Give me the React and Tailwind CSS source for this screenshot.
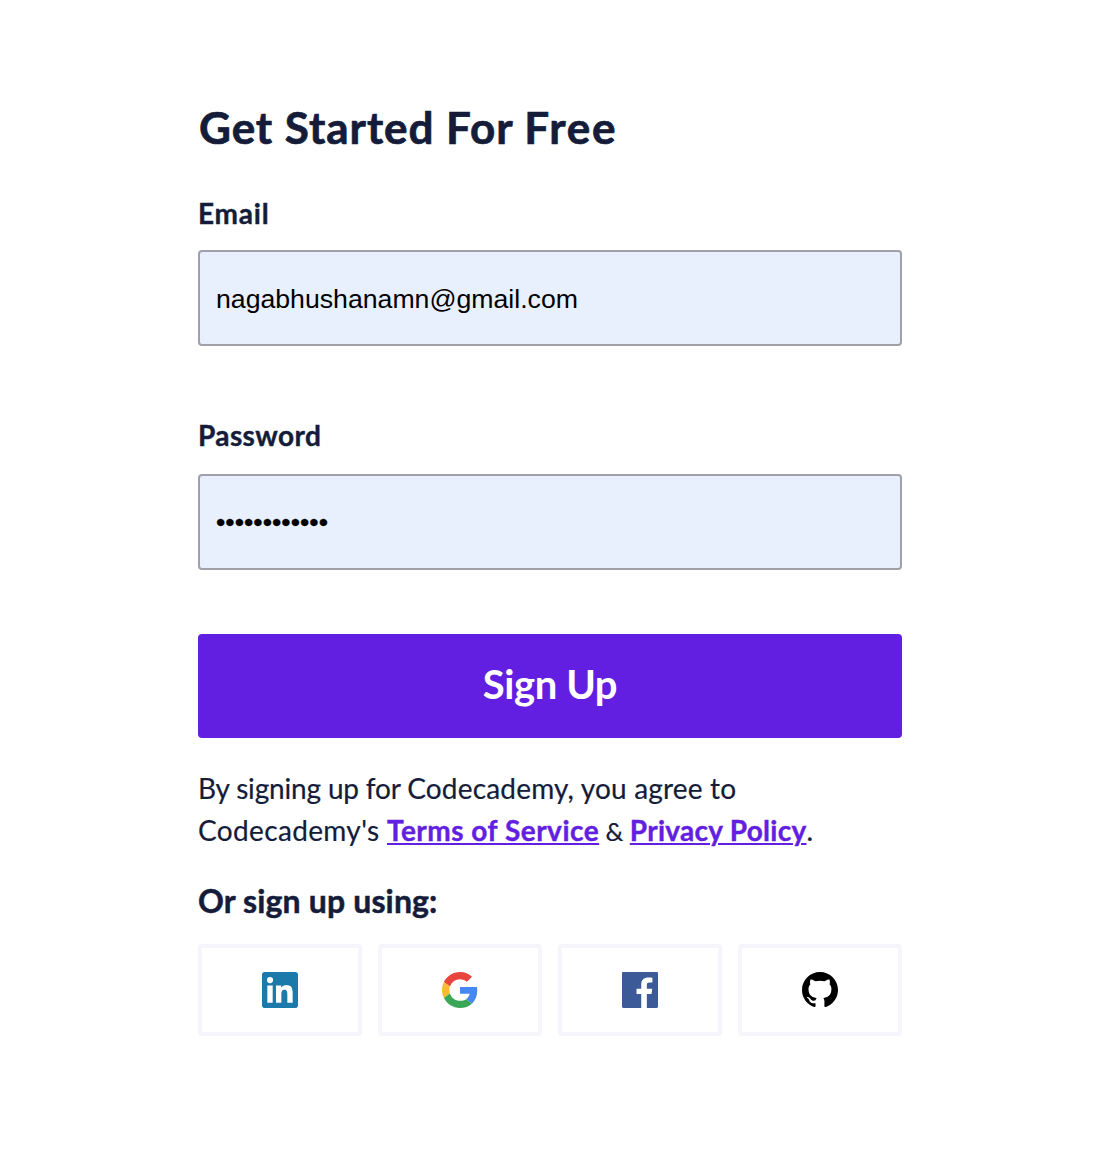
import React from "react";

function LinkedIn() {
  return (
    <svg viewBox="0 0 24 24" className="h-9 w-9" fill="#1b7aaa">
      <path d="M20.447 20.452h-3.554v-5.569c0-1.328-.027-3.037-1.852-3.037-1.853 0-2.136 1.445-2.136 2.939v5.667H9.351V9h3.414v1.561h.046c.477-.9 1.637-1.85 3.37-1.85 3.601 0 4.267 2.37 4.267 5.455v6.286zM5.337 7.433a2.062 2.062 0 0 1-2.063-2.065 2.064 2.064 0 1 1 2.063 2.065zm1.782 13.019H3.555V9h3.564v11.452zM22.225 0H1.771C.792 0 0 .774 0 1.729v20.542C0 23.227.792 24 1.771 24h20.451C23.2 24 24 23.227 24 22.271V1.729C24 .774 23.2 0 22.222 0h.003z" />
    </svg>
  );
}

function Google() {
  return (
    <svg viewBox="0 0 48 48" className="h-9 w-9">
      <path fill="#E8453C" d="M24 9.5c3.54 0 6.71 1.22 9.21 3.6l6.85-6.85C35.9 2.38 30.47 0 24 0 14.62 0 6.51 5.38 2.56 13.22l7.98 6.19C12.43 13.72 17.74 9.5 24 9.5z" />
      <path fill="#4688F1" d="M46.98 24.55c0-1.57-.15-3.09-.38-4.55H24v9.02h12.94c-.58 2.96-2.26 5.48-4.78 7.18l7.73 6c4.51-4.18 7.09-10.36 7.09-17.65z" />
      <path fill="#FABB2D" d="M10.53 28.59c-.48-1.45-.76-2.99-.76-4.59s.27-3.14.76-4.59l-7.98-6.19C.92 16.46 0 20.12 0 24c0 3.88.92 7.54 2.56 10.78l7.97-6.19z" />
      <path fill="#3AA757" d="M24 48c6.48 0 11.93-2.13 15.89-5.81l-7.73-6c-2.15 1.45-4.92 2.3-8.16 2.3-6.26 0-11.57-4.22-13.47-9.91l-7.98 6.19C6.51 42.62 14.62 48 24 48z" />
    </svg>
  );
}

function Facebook() {
  return (
    <svg viewBox="0 0 24 24" className="h-9 w-9" fill="#3d5a98">
      <path d="M23.2 0H.8C.36 0 0 .36 0 .8v22.4c0 .44.36.8.8.8h12.018v-9.294H9.689v-3.621h3.129V8.41c0-3.099 1.894-4.785 4.659-4.785 1.325 0 2.464.097 2.796.141v3.24h-1.921c-1.5 0-1.792.721-1.792 1.771v2.311h3.584l-.465 3.63H16.56V24h6.64c.44 0 .8-.36.8-.8V.8c0-.44-.36-.8-.8-.8" />
    </svg>
  );
}

function GitHub() {
  return (
    <svg viewBox="0 0.297 24 24" className="h-9 w-9" fill="#000">
      <path d="M12 .297c-6.63 0-12 5.373-12 12 0 5.303 3.438 9.8 8.205 11.385.6.113.82-.258.82-.577 0-.285-.01-1.04-.015-2.04-3.338.724-4.042-1.61-4.042-1.61C4.422 18.07 3.633 17.7 3.633 17.7c-1.087-.744.084-.729.084-.729 1.205.084 1.838 1.236 1.838 1.236 1.07 1.835 2.809 1.305 3.495.998.108-.776.417-1.305.76-1.605-2.665-.3-5.466-1.332-5.466-5.93 0-1.31.465-2.38 1.235-3.22-.135-.303-.54-1.523.105-3.176 0 0 1.005-.322 3.3 1.23.96-.267 1.98-.399 3-.405 1.02.006 2.04.138 3 .405 2.28-1.552 3.285-1.23 3.285-1.23.645 1.653.24 2.873.12 3.176.765.84 1.23 1.91 1.23 3.22 0 4.61-2.805 5.625-5.475 5.92.42.36.81 1.096.81 2.22 0 1.606-.015 2.896-.015 3.286 0 .315.21.69.825.57C20.565 22.092 24 17.592 24 12.297c0-6.627-5.373-12-12-12" />
    </svg>
  );
}

const providers = [
  { name: "LinkedIn", Icon: LinkedIn },
  { name: "Google", Icon: Google },
  { name: "Facebook", Icon: Facebook },
  { name: "GitHub", Icon: GitHub },
];

export default function App() {
  return (
    <main className="h-[1168px] w-full bg-white pl-[198px] pt-[97px] font-['Lato',sans-serif] text-[#141c3a]">
      <form className="flex w-[704px] flex-col" onSubmit={(e) => e.preventDefault()}>
        <h1 className="h-[60px] whitespace-nowrap pl-px text-[44px] font-bold leading-[60px] tracking-[0.95px] [-webkit-text-stroke:0.7px]">
          Get Started For <span className="tracking-[1.8px]">Free</span>
        </h1>
        <label className="mt-[34px] h-[44px] text-[28px] font-bold leading-[44px] tracking-[0.8px] [-webkit-text-stroke:0.4px]">Email</label>
        <div className="mt-[15px] flex h-24 items-center rounded-[4px] border-2 border-[#a0a0a8] bg-[#e8effd] px-4 pt-px font-['Liberation_Sans',sans-serif] text-[26.67px] leading-8 text-black">
          nagabhushanamn@gmail.com
        </div>
        <label className="mt-[67px] h-[44px] text-[28px] font-bold leading-[44px] tracking-[0.4px] [-webkit-text-stroke:0.4px]">Password</label>
        <div className="mt-[17px] flex h-24 items-center rounded-[4px] border-2 border-[#a0a0a8] bg-[#e8effd] px-4 font-['Liberation_Sans',sans-serif] text-[26.67px] leading-8 text-black [-webkit-text-stroke:0.3px]">
          ••••••••••••
        </div>
        <button className="mt-16 h-[104px] rounded-[4px] bg-[#621fe1] pb-1 text-[40px] font-bold leading-none tracking-[-0.4px] text-white">
          Sign Up
        </button>
        <p className="mt-[29px] whitespace-nowrap text-[28px] leading-[42px] [-webkit-text-stroke:0.2px]">
          <span className="block"><span className="tracking-[-0.17px]">By signing up for </span><span className="tracking-[0.18px]">Codecademy, you agree to</span></span>
          <span className="block">
            <span className="tracking-[0.35px]">Codecademy's </span>
            <a className="font-bold tracking-[0.5px] text-[#621fe1] underline decoration-2 underline-offset-2 [-webkit-text-stroke:0.4px]">Terms of Service</a>
            <span className="text-[25px] leading-none"> &amp; </span>
            <a className="font-bold tracking-[0.28px] text-[#621fe1] underline decoration-2 underline-offset-2 [-webkit-text-stroke:0.4px]">Privacy Policy</a>.
          </span>
        </p>
        <h2 className="mt-[26px] h-[48px] text-[32px] font-bold leading-[48px] tracking-[0.15px] [-webkit-text-stroke:0.5px]">Or sign up using:</h2>
        <div className="mt-[19px] grid grid-cols-4 gap-4">
          {providers.map(({ name, Icon }) => (
            <button key={name} type="button" aria-label={name} className="flex h-[92px] items-center justify-center rounded-[4px] border-4 border-[#f5f5fb] bg-white">
              <Icon />
            </button>
          ))}
        </div>
      </form>
    </main>
  );
}
